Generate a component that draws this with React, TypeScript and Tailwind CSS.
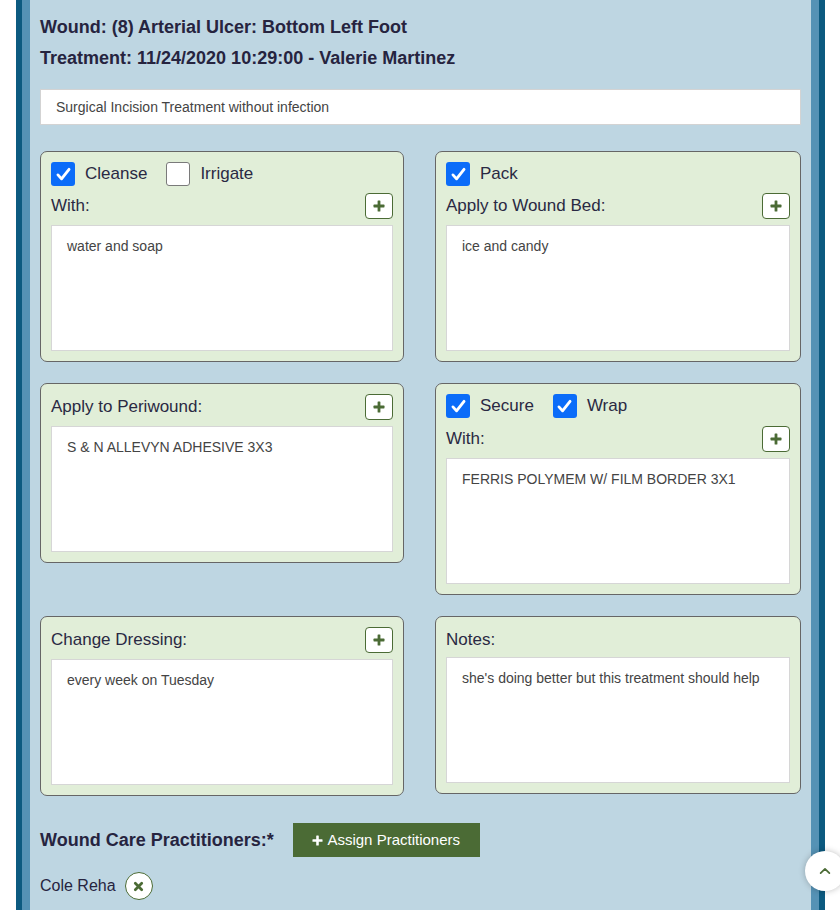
import type { ReactNode } from "react";

const font = { fontFamily: '"Liberation Sans", Arial, sans-serif' };

function PlusGlyph({ className }: { className?: string }) {
  return (
    <svg viewBox="0 0 12 12" className={className} fill="currentColor">
      <rect x="4.6" y="0.5" width="2.8" height="11" rx="0.6" />
      <rect x="0.5" y="4.6" width="11" height="2.8" rx="0.6" />
    </svg>
  );
}

function CheckBox({ checked }: { checked: boolean }) {
  if (!checked) {
    return <span className="block h-[24px] w-[24px] rounded-[3px] border border-[#7a7a7a] bg-white" />;
  }
  return (
    <span className="grid h-[24px] w-[24px] place-items-center rounded-[3px] bg-[#0b6cf9]">
      <svg viewBox="0 0 24 24" className="h-[19px] w-[19px]" fill="none" stroke="white" strokeWidth="3.6" strokeLinecap="round" strokeLinejoin="round">
        <path d="M5 12.5l4.5 5L19 5.5" />
      </svg>
    </span>
  );
}

function AddButton() {
  return (
    <button className="grid h-[26px] w-[28px] place-items-center rounded-[4px] border border-[#4b6b35] bg-white text-[#4b6b35]">
      <PlusGlyph className="h-[12px] w-[12px]" />
    </button>
  );
}

function Checks({ items }: { items: [string, boolean][] }) {
  return (
    <div className="flex h-[24px] items-center">
      {items.map(([label, on], i) => (
        <label key={label} className={`flex items-center gap-[10px] ${i > 0 ? "ml-[19px]" : ""}`}>
          <CheckBox checked={on} />
          <span className="text-[17px] text-[#2a2943]">{label}</span>
        </label>
      ))}
    </div>
  );
}

function Field({ label, add = true, text, gap = "mt-[6px]" }: { label: string; add?: boolean; text: string; gap?: string }) {
  return (
    <>
      <div className="flex h-[26px] items-center justify-between">
        <span className="text-[17px] text-[#2a2943]">{label}</span>
        {add && <AddButton />}
      </div>
      <div className={`${gap} h-[126px] border border-[#d6d6d6] bg-white px-[15px] pt-[10px] text-[14px] text-[#444]`}>
        {text}
      </div>
    </>
  );
}

function Card({ children }: { children: ReactNode }) {
  return (
    <div className="rounded-[7px] border border-[#666] bg-[#e1eed8] px-[10px] pb-[10px] pt-[10px]">
      {children}
    </div>
  );
}

export default function App() {
  return (
    <div style={font} className="relative h-[910px] w-[840px] overflow-hidden bg-white">
      <div className="ml-[16px] h-full w-[809px] border-x-[6px] border-[#0c5a80]">
        <div className="h-full border-x-[8px] border-[#5592b5] bg-[#bed6e2] px-[10px] pt-[14px]">
          <h2 className="text-[18px] font-bold leading-[26px] text-[#26243f]">
            Wound: (8) Arterial Ulcer: Bottom Left Foot
          </h2>
          <h2 className="mt-[5px] text-[18px] font-bold leading-[26px] text-[#26243f]">
            Treatment: 11/24/2020 10:29:00 - Valerie Martinez
          </h2>

          <div className="mt-[18px] flex h-[36px] items-center border border-[#d3d3d3] bg-white px-[15px] text-[14px] text-[#444]">
            Surgical Incision Treatment without infection
          </div>

          <div className="mt-[26px] grid grid-cols-[364px_366px] items-start gap-x-[31px] gap-y-[21px]">
            <Card>
              <Checks items={[["Cleanse", true], ["Irrigate", false]]} />
              <div className="mt-[7px]">
                <Field label="With:" text="water and soap" />
              </div>
            </Card>
            <Card>
              <Checks items={[["Pack", true]]} />
              <div className="mt-[7px]">
                <Field label="Apply to Wound Bed:" text="ice and candy" />
              </div>
            </Card>
            <Card>
              <Field label="Apply to Periwound:" text="S & N ALLEVYN ADHESIVE 3X3" />
            </Card>
            <Card>
              <Checks items={[["Secure", true], ["Wrap", true]]} />
              <div className="mt-[8px]">
                <Field label="With:" text="FERRIS POLYMEM W/ FILM BORDER 3X1" />
              </div>
            </Card>
            <Card>
              <Field label="Change Dressing:" text="every week on Tuesday" />
            </Card>
            <Card>
              <Field label="Notes:" add={false} gap="mt-[4px]" text="she's doing better but this treatment should help" />
            </Card>
          </div>

          <div className="mt-[27px] flex items-center">
            <span className="text-[18px] font-bold text-[#26243f]">Wound Care Practitioners:*</span>
            <button className="ml-[19px] flex h-[34px] w-[187px] items-center justify-center gap-[4px] bg-[#4b6b35] text-[15px] text-white">
              <PlusGlyph className="h-[11px] w-[11px]" />
              Assign Practitioners
            </button>
          </div>

          <div className="mt-[15px] flex items-center">
            <span className="text-[16px] text-[#26243f]">Cole Reha</span>
            <button className="ml-[9px] grid h-[28px] w-[28px] place-items-center rounded-full border border-[#4b6b35] bg-white text-[#4b6b35]">
              <svg viewBox="0 0 12 12" className="h-[11px] w-[11px]" fill="none" stroke="currentColor" strokeWidth="3" strokeLinecap="round">
                <path d="M2.5 2.5l7 7M9.5 2.5l-7 7" />
              </svg>
            </button>
          </div>
        </div>
      </div>

      <button className="absolute left-[805px] top-[851px] grid h-[40px] w-[40px] place-items-center rounded-full bg-white shadow-[0_0_6px_rgba(0,0,0,0.25)] text-[#4b6b35]">
        <svg viewBox="0 0 16 16" className="h-[14px] w-[14px]" fill="none" stroke="currentColor" strokeWidth="2" strokeLinecap="round" strokeLinejoin="round">
          <path d="M3 10.5l5-5 5 5" />
        </svg>
      </button>
    </div>
  );
}
